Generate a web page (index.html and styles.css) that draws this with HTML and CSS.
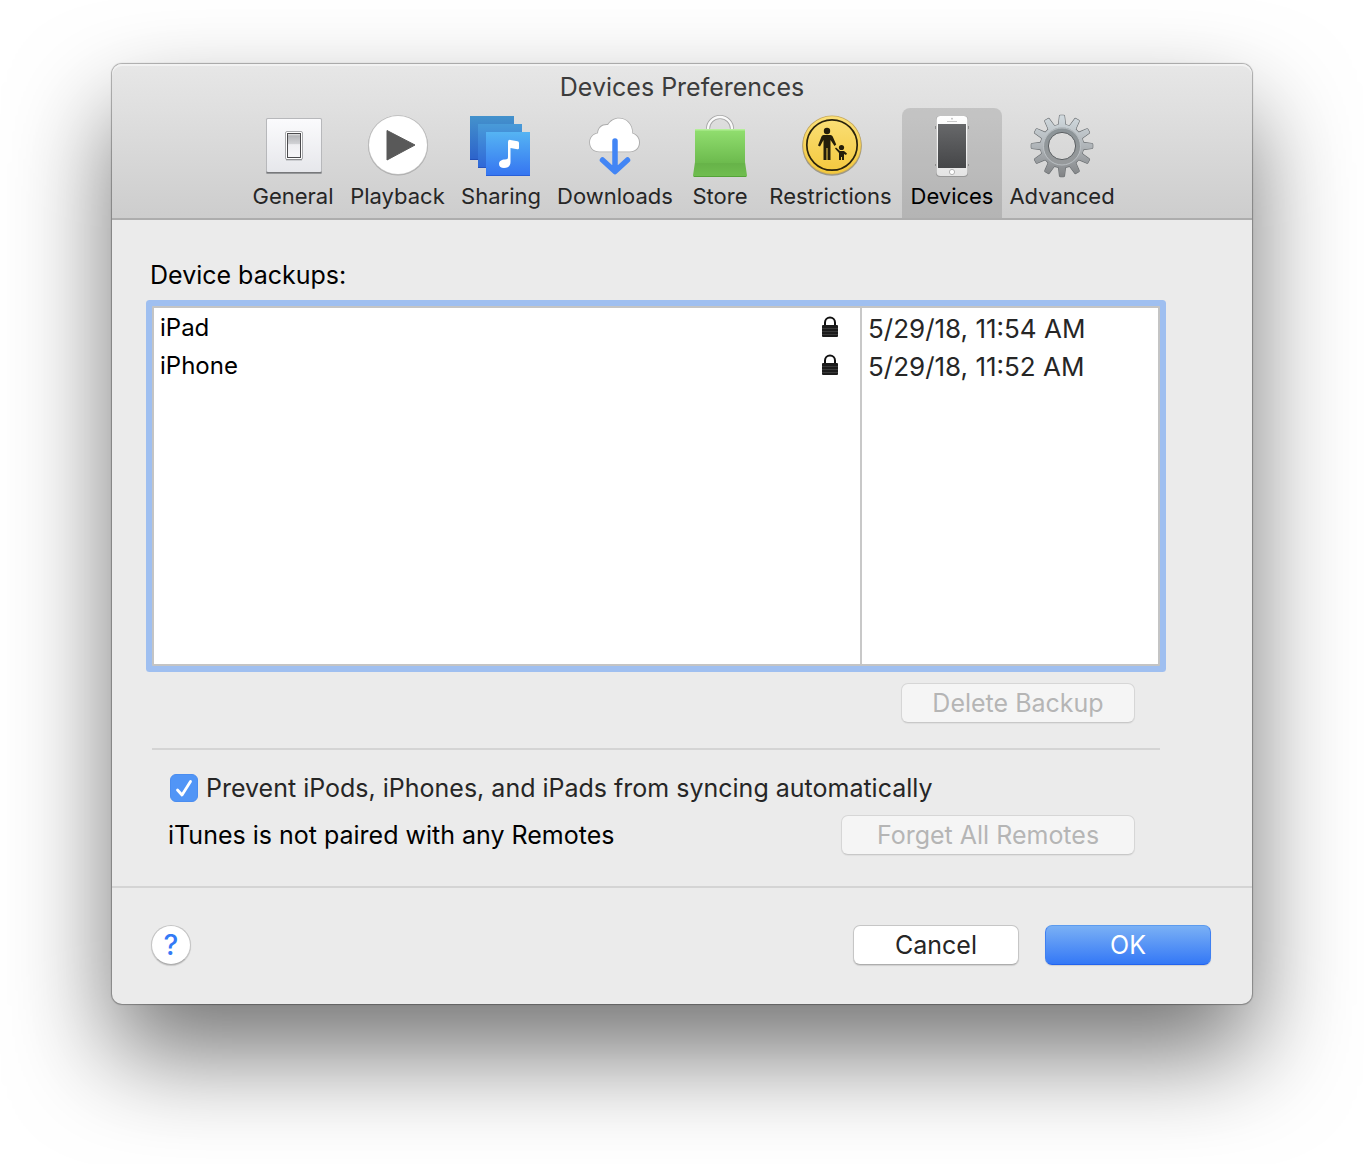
FILE: index.html
```html
<!DOCTYPE html>
<html lang="en">
<head>
<meta charset="utf-8">
<meta name="viewport" content="width=device-width, initial-scale=1">
<title>Devices Preferences</title>
<link rel="stylesheet" href="styles.css">
</head>
<body>
<main class="window">
  <header class="toolbar">
    <h1 class="title">Devices Preferences</h1>
    <nav class="tabs" aria-label="Preference panes">
      <button class="tab" type="button">
        <svg class="icon" viewBox="0 0 64 64" aria-hidden="true">
          <defs>
            <linearGradient id="plate" x2="0" y2="1"><stop stop-color="#fbfbfd"/><stop offset="1" stop-color="#e6e7eb"/></linearGradient>
            <linearGradient id="rocker" x2="0" y2="1"><stop stop-color="#f2f2f2"/><stop offset=".1" stop-color="#b5b6b9"/><stop offset=".45" stop-color="#d3d4d7"/><stop offset=".46" stop-color="#eeeef1"/><stop offset="1" stop-color="#f6f6f8"/></linearGradient>
          </defs>
          <rect x="5" y="4" width="56" height="56" rx="1.5" fill="#b7b8bb"/>
          <path d="M5.500 58.500h55" stroke="#77787b" stroke-width="2"/>
          <rect x="6" y="5" width="54" height="53" rx="1" fill="url(#plate)"/>
          <rect x="24.500" y="17.500" width="17" height="28" rx="1.500" fill="#fff" stroke="#a8a9ac"/>
          <path d="M25 45.800h16" stroke="#88898c"/>
          <rect x="26.500" y="19.500" width="13" height="24" fill="url(#rocker)" stroke="#4a4a4d"/>
        </svg>
        <span>General</span>
      </button>
      <button class="tab" type="button">
        <svg class="icon" viewBox="0 0 64 64" aria-hidden="true">
          <circle cx="32" cy="31.500" r="30" fill="#aaa"/>
          <circle cx="32" cy="31" r="29.800" fill="#c2c2c2"/>
          <circle cx="32" cy="31" r="29" fill="#fff"/>
          <path d="M21 16.500 49 31 21 46z" fill="#595959" stroke="#595959" stroke-linejoin="round"/>
        </svg>
        <span>Playback</span>
      </button>
      <button class="tab" type="button">
        <svg class="icon" viewBox="0 0 64 64" aria-hidden="true">
          <defs>
            <linearGradient id="card1" x2="0" y2="1"><stop stop-color="#4492cc"/><stop offset="1" stop-color="#2c62cb"/></linearGradient>
            <linearGradient id="card2" x2="0" y2="1"><stop stop-color="#499bd8"/><stop offset="1" stop-color="#2f67d8"/></linearGradient>
            <linearGradient id="card3" x2="0" y2="1"><stop stop-color="#55b4f3"/><stop offset="1" stop-color="#3574f1"/></linearGradient>
          </defs>
          <path d="M1 2h44v44H1z" fill="url(#card1)"/><path d="M1 45.500h44" stroke="#2350b5"/>
          <path d="M9 10h44v44H9z" fill="url(#card2)"/><path d="M9 53.500h44" stroke="#2654bd"/>
          <path d="M17 18h44v44H17z" fill="url(#card3)"/><path d="M17 61.500h44" stroke="#285fd8"/>
          <path d="M39 28q0-2.500 2.500-2.100l7 1.400q1.500.3 1.500 1.800V34q0 1.600-1.600 1.300L41.500 34v14c0 4-2.600 6-6.500 6-3 0-5-1.600-5-4 0-3 2.600-4.500 6-4.500 2.200 0 3-.7 3-2.500z" fill="#fff"/>
        </svg>
        <span>Sharing</span>
      </button>
      <button class="tab" type="button">
        <svg class="icon" viewBox="0 0 64 64" aria-hidden="true">
          <g transform="translate(-1 0)">
            <path d="M17.500 38.300C11 38.300 7.200 34 7.200 28.500c0-5 3-8.800 8-9.800C15.500 13 20 9.500 25.500 10 28 6 32 3.700 37 3.700c8 0 14 6.300 14 15.300 4 1.300 7 4.500 7 9.500 0 6-4.500 9.800-10 9.800z" fill="#adadad"/>
            <path d="M17.500 37.500C11.500 37.500 8 33.500 8 28.500c0-5 3-8.300 8-9.300.3-5.700 4.500-8.700 10-8.200 2.500-4 6.500-6.500 11-6.500 7.500 0 13.400 6 13.300 15 4 1.300 6.700 4.300 6.700 9 0 5.500-4 9-9 9z" fill="#fff"/>
            <path d="M33 27v29M20.500 46 33 57.500 45.500 46" fill="none" stroke="#4285f5" stroke-width="5.500" stroke-linecap="round" stroke-linejoin="round"/>
          </g>
        </svg>
        <span>Downloads</span>
      </button>
      <button class="tab" type="button">
        <svg class="icon" viewBox="0 0 64 64" aria-hidden="true">
          <defs><linearGradient id="bag" x2="0" y2="1"><stop stop-color="#92df70"/><stop offset=".7" stop-color="#6dbb4e"/><stop offset=".72" stop-color="#67b349"/><stop offset="1" stop-color="#70be50"/></linearGradient></defs>
          <path d="M20 17v-2a12 12 0 0 1 24 0v2" fill="none" stroke="#a5a5a5" stroke-width="4"/>
          <path d="M20 17v-2a12 12 0 0 1 24 0v2" fill="none" stroke="#fafafa" stroke-width="2.400"/>
          <path d="M7 15h50v33l2 13.500q0 1.500-1.500 1.500h-51Q5 63 5 61.500L7 48z" fill="url(#bag)"/>
          <path d="M7 15.700h50" stroke="#b4ef98" stroke-width="1.400"/><path d="M6 62.500h52" stroke="#54a338"/>
        </svg>
        <span>Store</span>
      </button>
      <button class="tab" type="button">
        <svg class="icon" viewBox="0 0 64 64" aria-hidden="true">
          <defs><linearGradient id="sign" x2="0" y2="1"><stop stop-color="#fbe078"/><stop offset="1" stop-color="#f3c83d"/></linearGradient></defs>
          <g transform="translate(1 0)">
            <circle cx="32" cy="32" r="29.800" fill="#99978b"/>
            <circle cx="32" cy="31" r="29.600" fill="#c5a85d"/>
            <circle cx="32" cy="31" r="28.800" fill="url(#sign)"/>
            <circle cx="32" cy="31" r="25.200" fill="none" stroke="#2a230c" stroke-width="1.700"/>
            <g fill="#241e0a">
              <circle cx="27" cy="17" r="3.200"/>
              <path d="M23.500 21h7q1.600 0 2.200 1.500l3.500 8-1.700 1.500-4-6V46h-3V34h-1v12h-3V26l-3.500 6.500-2-1 3.500-9q.6-1.500 2-1.500z"/>
              <circle cx="41.500" cy="33.500" r="2.600"/>
              <path d="m36 33.500 4 3.500h4l3 2.500-1 1.500-2-1v6h-2v-3h-1v3h-2v-7l-4-4.500z"/>
            </g>
          </g>
        </svg>
        <span>Restrictions</span>
      </button>
      <button class="tab tab-active" type="button" aria-current="page">
        <svg class="icon" viewBox="0 0 64 64" aria-hidden="true">
          <defs><linearGradient id="screen" x2="0" y2="1"><stop stop-color="#67686a"/><stop offset="1" stop-color="#454648"/></linearGradient>
          <linearGradient id="case" x2="0" y2="1"><stop stop-color="#fff"/><stop offset="1" stop-color="#e4e4e4"/></linearGradient></defs>
          <path d="M15.500 12v3M48.500 12v3M15.500 50v2M48.500 50v2" stroke="#8d8d8d"/>
          <rect x="16" y="2" width="32" height="61" rx="4" fill="#989898"/>
          <rect x="16.500" y="2" width="31" height="60" rx="4" fill="url(#case)"/>
          <path d="M18 10h28v44H18z" fill="url(#screen)"/>
          <path d="M27 7.500h10" stroke="#c9c9c9"/><circle cx="32" cy="4.700" r=".9" fill="#bbb"/>
          <circle cx="32" cy="58" r="2.600" fill="#fff" stroke="#b4b4b4"/>
        </svg>
        <span>Devices</span>
      </button>
      <button class="tab" type="button">
        <svg class="icon" viewBox="0 0 64 64" aria-hidden="true">
          <defs>
            <linearGradient id="metal" gradientUnits="userSpaceOnUse" x1="0" y1="0" x2="0" y2="64"><stop stop-color="#d3dce1"/><stop offset=".5" stop-color="#b0b5b9"/><stop offset="1" stop-color="#7f8183"/></linearGradient>
            <linearGradient id="rim" x2="0" y2="1"><stop stop-color="#8c9498"/><stop offset="1" stop-color="#96999b"/></linearGradient>
            <path id="tooth" d="M26.500 12.500Q28.400 11.800 28.700 9.500L29.500 2.200Q29.600 1.300 30.500 1.300h3q.9 0 1 .9l.8 7.300q.3 2.300 2.200 3z"/>
            <clipPath id="gear-shape">
              <use href="#tooth"/><use href="#tooth" transform="rotate(30 32 32)"/><use href="#tooth" transform="rotate(60 32 32)"/><use href="#tooth" transform="rotate(90 32 32)"/><use href="#tooth" transform="rotate(120 32 32)"/><use href="#tooth" transform="rotate(150 32 32)"/><use href="#tooth" transform="rotate(180 32 32)"/><use href="#tooth" transform="rotate(210 32 32)"/><use href="#tooth" transform="rotate(240 32 32)"/><use href="#tooth" transform="rotate(270 32 32)"/><use href="#tooth" transform="rotate(300 32 32)"/><use href="#tooth" transform="rotate(330 32 32)"/>
              <circle cx="32" cy="32" r="21.500"/>
            </clipPath>
            <mask id="hole"><path d="M0 0h64v64H0z" fill="#fff"/><circle cx="32" cy="32" r="13.300" fill="#000"/></mask>
          </defs>
          <g mask="url(#hole)">
            <g fill="#696d70" stroke="#696d70" stroke-width="1.200">
              <use href="#tooth"/><use href="#tooth" transform="rotate(30 32 32)"/><use href="#tooth" transform="rotate(60 32 32)"/><use href="#tooth" transform="rotate(90 32 32)"/><use href="#tooth" transform="rotate(120 32 32)"/><use href="#tooth" transform="rotate(150 32 32)"/><use href="#tooth" transform="rotate(180 32 32)"/><use href="#tooth" transform="rotate(210 32 32)"/><use href="#tooth" transform="rotate(240 32 32)"/><use href="#tooth" transform="rotate(270 32 32)"/><use href="#tooth" transform="rotate(300 32 32)"/><use href="#tooth" transform="rotate(330 32 32)"/>
              <circle cx="32" cy="32" r="21.500"/>
            </g>
            <path d="M0 0h64v64H0z" fill="url(#metal)" clip-path="url(#gear-shape)"/>
            <circle cx="32" cy="32" r="16" fill="none" stroke="url(#rim)" stroke-width="5"/>
            <circle cx="32" cy="32.500" r="18.500" fill="none" stroke="#c3c8cb" stroke-width=".8"/>
          </g>
          <circle cx="32" cy="32" r="13.600" fill="none" stroke="#5c6063"/>
        </svg>
        <span>Advanced</span>
      </button>
    </nav>
  </header>

  <section class="content">
    <h2 class="list-label" id="backups-label">Device backups:</h2>
    <div class="list">
      <table class="backups" aria-labelledby="backups-label">
        <tbody>
          <tr>
            <td>
              <div class="device"><span>iPad</span>
                <svg class="lock" viewBox="0 0 18 22" role="img" aria-label="Encrypted"><path d="M4 10V6.500a5 5 0 0 1 10 0V10" fill="none" stroke="#111" stroke-width="2"/><rect x="1" y="9" width="16" height="12" rx="1" fill="#1c1c1c"/><path d="M1 12.500h16M1 15.500h16M1 18.500h16" stroke="#3a3a3a"/></svg>
              </div>
            </td>
            <td class="date">5/29/18, 11:54 AM</td>
          </tr>
          <tr>
            <td>
              <div class="device"><span>iPhone</span>
                <svg class="lock" viewBox="0 0 18 22" role="img" aria-label="Encrypted"><path d="M4 10V6.500a5 5 0 0 1 10 0V10" fill="none" stroke="#111" stroke-width="2"/><rect x="1" y="9" width="16" height="12" rx="1" fill="#1c1c1c"/><path d="M1 12.500h16M1 15.500h16M1 18.500h16" stroke="#3a3a3a"/></svg>
              </div>
            </td>
            <td class="date">5/29/18, 11:52 AM</td>
          </tr>
          <tr class="filler"><td></td><td></td></tr>
        </tbody>
      </table>
    </div>
    <div class="list-actions">
      <button class="btn btn-delete" type="button" disabled>Delete Backup</button>
    </div>
    <div class="options">
      <label class="check">
        <span class="check-box">
          <input type="checkbox" checked>
          <svg viewBox="0 0 28 28" aria-hidden="true"><path d="m7.500 16 4.500 5L20.500 7.500" fill="none" stroke="#fff" stroke-width="2.800" stroke-linecap="round" stroke-linejoin="round"/></svg>
        </span>
        <span>Prevent iPods, iPhones, and iPads from syncing automatically</span>
      </label>
      <div class="remotes">
        <p class="status">iTunes is not paired with any Remotes</p>
        <button class="btn btn-forget" type="button" disabled>Forget All Remotes</button>
      </div>
    </div>
  </section>

  <footer class="footer">
    <button class="help" type="button" aria-label="Help">?</button>
    <div class="actions">
      <button class="btn" type="button">Cancel</button>
      <button class="btn btn-primary" type="button">OK</button>
    </div>
  </footer>
</main>
</body>
</html>
```
FILE: styles.css
```css
* {
  box-sizing: border-box;
}

body {
  margin: 0;
  padding: 64px 112px 160px;
  background: #fff;
  color: #000;
  font-family: Inter, "Liberation Sans", sans-serif;
  font-size: 25px;
  line-height: 32px;
}

button {
  margin: 0;
  font: inherit;
}

h1,
h2,
p {
  margin: 0;
  font-size: inherit;
  font-weight: 400;
}

.window {
  border-radius: 10px;
  background: #ebebeb;
  box-shadow: 0 0 1px 1px rgba(0, 0, 0, 0.3), 0 50px 100px rgba(0, 0, 0, 0.55);
}

.toolbar {
  border-bottom: 2px solid #adadad;
  border-radius: 10px 10px 0 0;
  background: linear-gradient(#e7e7e7, #cdcdcd);
  box-shadow: inset 0 2px 0 #f2f2f2;
}

.title {
  padding: 7px 0 5px;
  color: #3c3c3c;
  text-align: center;
}

.tabs {
  display: grid;
  grid-template-columns: 98px 111px 96px 132px 78px 143px 100px 120px;
  justify-content: center;
  padding-left: 2px;
}

.tab {
  display: flex;
  flex-direction: column;
  align-items: center;
  gap: 4px;
  height: 110px;
  padding: 6px 0;
  border: 0;
  border-radius: 8px 8px 0 0;
  background: none;
  color: #262626;
  font-size: 22px;
  line-height: 28px;
  white-space: nowrap;
}

.tab-active {
  background: rgba(0, 0, 0, 0.12);
  color: #000;
}

.icon {
  flex: none;
  width: 64px;
  height: 64px;
}

.content {
  padding: 39px 92px 31px 40px;
}

.list-label {
  margin-left: -2px;
}

.list {
  margin-top: 15px;
  border: 2px solid #c4c4c4;
  border-radius: 1px;
  background: #fff;
  box-shadow: 0 0 0 6px #9fbff0;
}

.backups {
  width: 100%;
  height: 356px;
  border-spacing: 0;
}

.backups tr {
  height: 38px;
}

.backups .filler {
  height: auto;
}

.backups td {
  padding: 2px 6px 0;
}

.backups td + td {
  width: 298px;
  border-left: 2px solid #c8c8c8;
}

.device {
  display: flex;
  align-items: center;
  justify-content: space-between;
  padding-right: 15px;
  font-size: 24px;
}

.lock {
  width: 18px;
  height: 22px;
  margin-bottom: 2px;
}

.backups .date {
  padding-top: 4px;
  color: #262626;
  font-size: 26px;
}

.btn {
  width: 166px;
  height: 40px;
  padding: 0;
  border: 1px solid #c6c6c6;
  border-bottom-color: #adadad;
  border-radius: 7px;
  background: #fff;
  box-shadow: 0 1px 1px rgba(0, 0, 0, 0.12);
  color: #262626;
  line-height: 36px;
}

.btn:disabled {
  border-color: #d6d6d6;
  border-bottom-color: #c8c8c8;
  background: #f5f5f5;
  box-shadow: 0 1px 1px rgba(0, 0, 0, 0.05);
  color: #b5b5b5;
}

.btn-delete {
  width: 234px;
}

.btn-forget {
  width: 294px;
}

.btn-primary {
  border-color: #5c9bee #3f80f1 #2263ee;
  background: linear-gradient(#7ab0f5, #3478f6);
  color: #fff;
}

.list-actions {
  display: flex;
  justify-content: flex-end;
  padding: 17px 25px 25px 0;
}

.options {
  padding: 22px 25px 0 16px;
  border-top: 2px solid #d4d4d4;
}

.check {
  display: flex;
  align-items: center;
  gap: 8px;
  padding-left: 2px;
  color: #262626;
}

.check-box {
  display: grid;
}

.check-box input,
.check-box svg {
  grid-area: 1 / 1;
  width: 28px;
  height: 28px;
  margin: 0;
}

.check-box input {
  appearance: none;
  border: 1px solid #4a8df0;
  border-radius: 6px;
  background: #5195f6;
}

.check-box svg {
  pointer-events: none;
}

.remotes {
  display: flex;
  align-items: center;
  justify-content: space-between;
  margin-top: 11px;
}

.footer {
  display: flex;
  align-items: center;
  justify-content: space-between;
  padding: 37px 41px 39px 39px;
  border-top: 2px solid #d4d4d4;
}

.help {
  width: 40px;
  height: 40px;
  padding: 0;
  border: 1px solid #c4c4c4;
  border-bottom-color: #adadad;
  border-radius: 50%;
  background: #fff;
  box-shadow: 0 1px 1px rgba(0, 0, 0, 0.15);
  color: #337af6;
  font-size: 28px;
  font-weight: 500;
}

.actions {
  display: flex;
  gap: 26px;
}
```
